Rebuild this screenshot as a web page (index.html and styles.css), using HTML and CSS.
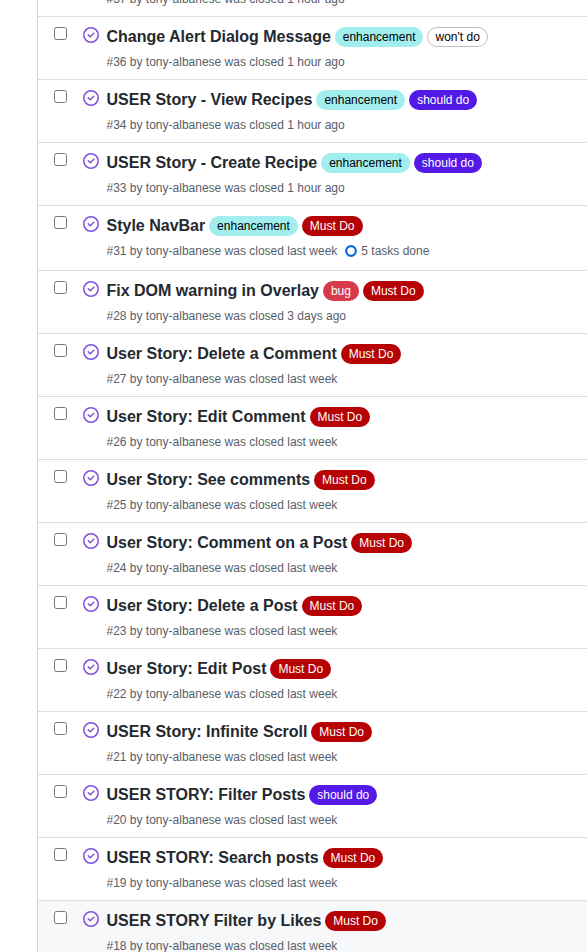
FILE: index.html
```
<!DOCTYPE html>
<html lang="en">
<head>
<meta charset="utf-8">
<title>Issues</title>
<link rel="stylesheet" href="styles.css">
</head>
<body>
<svg class="defs" width="0" height="0" aria-hidden="true">
<symbol id="closed" viewBox="0 0 16 16"><path d="M11.28 6.78a.75.75 0 0 0-1.06-1.06L7.25 8.69 5.78 7.22a.75.75 0 0 0-1.06 1.06l2 2a.75.75 0 0 0 1.06 0l3.5-3.5Z"/><path d="M16 8A8 8 0 1 1 0 8a8 8 0 0 1 16 0Zm-1.5 0a6.5 6.5 0 1 0-13 0 6.5 6.5 0 0 0 13 0Z"/></symbol>
</svg>
<main class="issues">
<div class="row"><input type="checkbox"><svg class="icon"><use href="#closed"/></svg><div class="body"><div class="head"></div><div class="meta">#37 by tony-albanese was closed 1 hour ago</div></div></div>
<div class="row"><input type="checkbox"><svg class="icon"><use href="#closed"/></svg><div class="body"><div class="head"><a class="title">Change Alert Dialog Message</a><span class="labels"><span class="label enhancement">enhancement</span><span class="label wont">won't do</span></span></div><div class="meta">#36 by tony-albanese was closed 1 hour ago</div></div></div>
<div class="row"><input type="checkbox"><svg class="icon"><use href="#closed"/></svg><div class="body"><div class="head"><a class="title">USER Story - View Recipes</a><span class="labels"><span class="label enhancement">enhancement</span><span class="label should">should do</span></span></div><div class="meta">#34 by tony-albanese was closed 1 hour ago</div></div></div>
<div class="row"><input type="checkbox"><svg class="icon"><use href="#closed"/></svg><div class="body"><div class="head"><a class="title">USER Story - Create Recipe</a><span class="labels"><span class="label enhancement">enhancement</span><span class="label should">should do</span></span></div><div class="meta">#33 by tony-albanese was closed 1 hour ago</div></div></div>
<div class="row with-tasks"><input type="checkbox"><svg class="icon"><use href="#closed"/></svg><div class="body"><div class="head"><a class="title">Style NavBar</a><span class="labels"><span class="label enhancement">enhancement</span><span class="label must">Must Do</span></span></div><div class="meta">#31 by tony-albanese was closed last week<span class="tasks"><svg class="ring" viewBox="0 0 12 12"><circle cx="6" cy="6" r="4.8"/></svg>5 tasks done</span></div></div></div>
<div class="row"><input type="checkbox"><svg class="icon"><use href="#closed"/></svg><div class="body"><div class="head"><a class="title">Fix DOM warning in Overlay</a><span class="labels"><span class="label bug">bug</span><span class="label must">Must Do</span></span></div><div class="meta">#28 by tony-albanese was closed 3 days ago</div></div></div>
<div class="row"><input type="checkbox"><svg class="icon"><use href="#closed"/></svg><div class="body"><div class="head"><a class="title">User Story: Delete a Comment</a><span class="labels"><span class="label must">Must Do</span></span></div><div class="meta">#27 by tony-albanese was closed last week</div></div></div>
<div class="row"><input type="checkbox"><svg class="icon"><use href="#closed"/></svg><div class="body"><div class="head"><a class="title">User Story: Edit Comment</a><span class="labels"><span class="label must">Must Do</span></span></div><div class="meta">#26 by tony-albanese was closed last week</div></div></div>
<div class="row"><input type="checkbox"><svg class="icon"><use href="#closed"/></svg><div class="body"><div class="head"><a class="title">User Story: See comments</a><span class="labels"><span class="label must">Must Do</span></span></div><div class="meta">#25 by tony-albanese was closed last week</div></div></div>
<div class="row"><input type="checkbox"><svg class="icon"><use href="#closed"/></svg><div class="body"><div class="head"><a class="title">User Story: Comment on a Post</a><span class="labels"><span class="label must">Must Do</span></span></div><div class="meta">#24 by tony-albanese was closed last week</div></div></div>
<div class="row"><input type="checkbox"><svg class="icon"><use href="#closed"/></svg><div class="body"><div class="head"><a class="title">User Story: Delete a Post</a><span class="labels"><span class="label must">Must Do</span></span></div><div class="meta">#23 by tony-albanese was closed last week</div></div></div>
<div class="row"><input type="checkbox"><svg class="icon"><use href="#closed"/></svg><div class="body"><div class="head"><a class="title">User Story: Edit Post</a><span class="labels"><span class="label must">Must Do</span></span></div><div class="meta">#22 by tony-albanese was closed last week</div></div></div>
<div class="row"><input type="checkbox"><svg class="icon"><use href="#closed"/></svg><div class="body"><div class="head"><a class="title">USER Story: Infinite Scroll</a><span class="labels"><span class="label must">Must Do</span></span></div><div class="meta">#21 by tony-albanese was closed last week</div></div></div>
<div class="row"><input type="checkbox"><svg class="icon"><use href="#closed"/></svg><div class="body"><div class="head"><a class="title">USER STORY: Filter Posts</a><span class="labels"><span class="label should">should do</span></span></div><div class="meta">#20 by tony-albanese was closed last week</div></div></div>
<div class="row"><input type="checkbox"><svg class="icon"><use href="#closed"/></svg><div class="body"><div class="head"><a class="title">USER STORY: Search posts</a><span class="labels"><span class="label must">Must Do</span></span></div><div class="meta">#19 by tony-albanese was closed last week</div></div></div>
<div class="row active"><input type="checkbox"><svg class="icon"><use href="#closed"/></svg><div class="body"><div class="head"><a class="title">USER STORY Filter by Likes</a><span class="labels"><span class="label must">Must Do</span></span></div><div class="meta">#18 by tony-albanese was closed last week</div></div></div>
</main>
</body>
</html>
```
FILE: styles.css
```
* { box-sizing: border-box; }
html, body { height: 100%; }
body {
  margin: 0;
  overflow: hidden;
  display: flow-root;
  background: #fff;
  color: #24292f;
  font-family: "Liberation Sans", Arial, sans-serif;
}
.defs { display: block; }
.issues {
  margin: -47px 0 0 37px;
  border-left: 1px solid #d0d7de;
}
.row {
  display: flex;
  align-items: flex-start;
  height: 63px;
  padding-left: 16px;
  border-top: 1px solid #d8dee4;
}
.with-tasks { height: 65px; }
.active { background: #f6f8fa; }
.row input {
  flex: none;
  width: 13px;
  height: 13px;
  margin: 10px 0 0;
}
.icon {
  flex: none;
  width: 16px;
  height: 16px;
  margin: 10px 0 0 16px;
  fill: #8250df;
}
.body {
  padding: 8px 0 0 7.5px;
  white-space: nowrap;
}
.head {
  height: 24px;
  font-size: 16px;
  line-height: 24px;
}
.title { font-weight: 600; }
.labels {
  display: inline-flex;
  gap: 4px;
  margin-left: 3.9px;
  vertical-align: top;
  padding-top: 2px;
}
.label {
  height: 20px;
  padding: 0 7px;
  border: 1px solid transparent;
  border-radius: 10px;
  font-size: 12px;
  line-height: 18px;
}
.enhancement { background: #a2eeef; color: #000; }
.should { background: #5319e7; color: #fff; }
.must { background: #b60205; color: #fff; }
.bug { background: #d73a4a; color: #fff; }
.wont { background: #fff; color: #000; border-color: #bfbfbf; }
.meta {
  display: flex;
  margin-top: 4px;
  height: 18px;
  font-size: 12px;
  line-height: 18px;
  color: #57606a;
}
.tasks {
  display: flex;
  align-items: center;
  margin-left: 8px;
}
.ring {
  width: 12px;
  height: 12px;
  margin-right: 4px;
  fill: none;
  stroke: #0969da;
  stroke-width: 2.2;
}
```
